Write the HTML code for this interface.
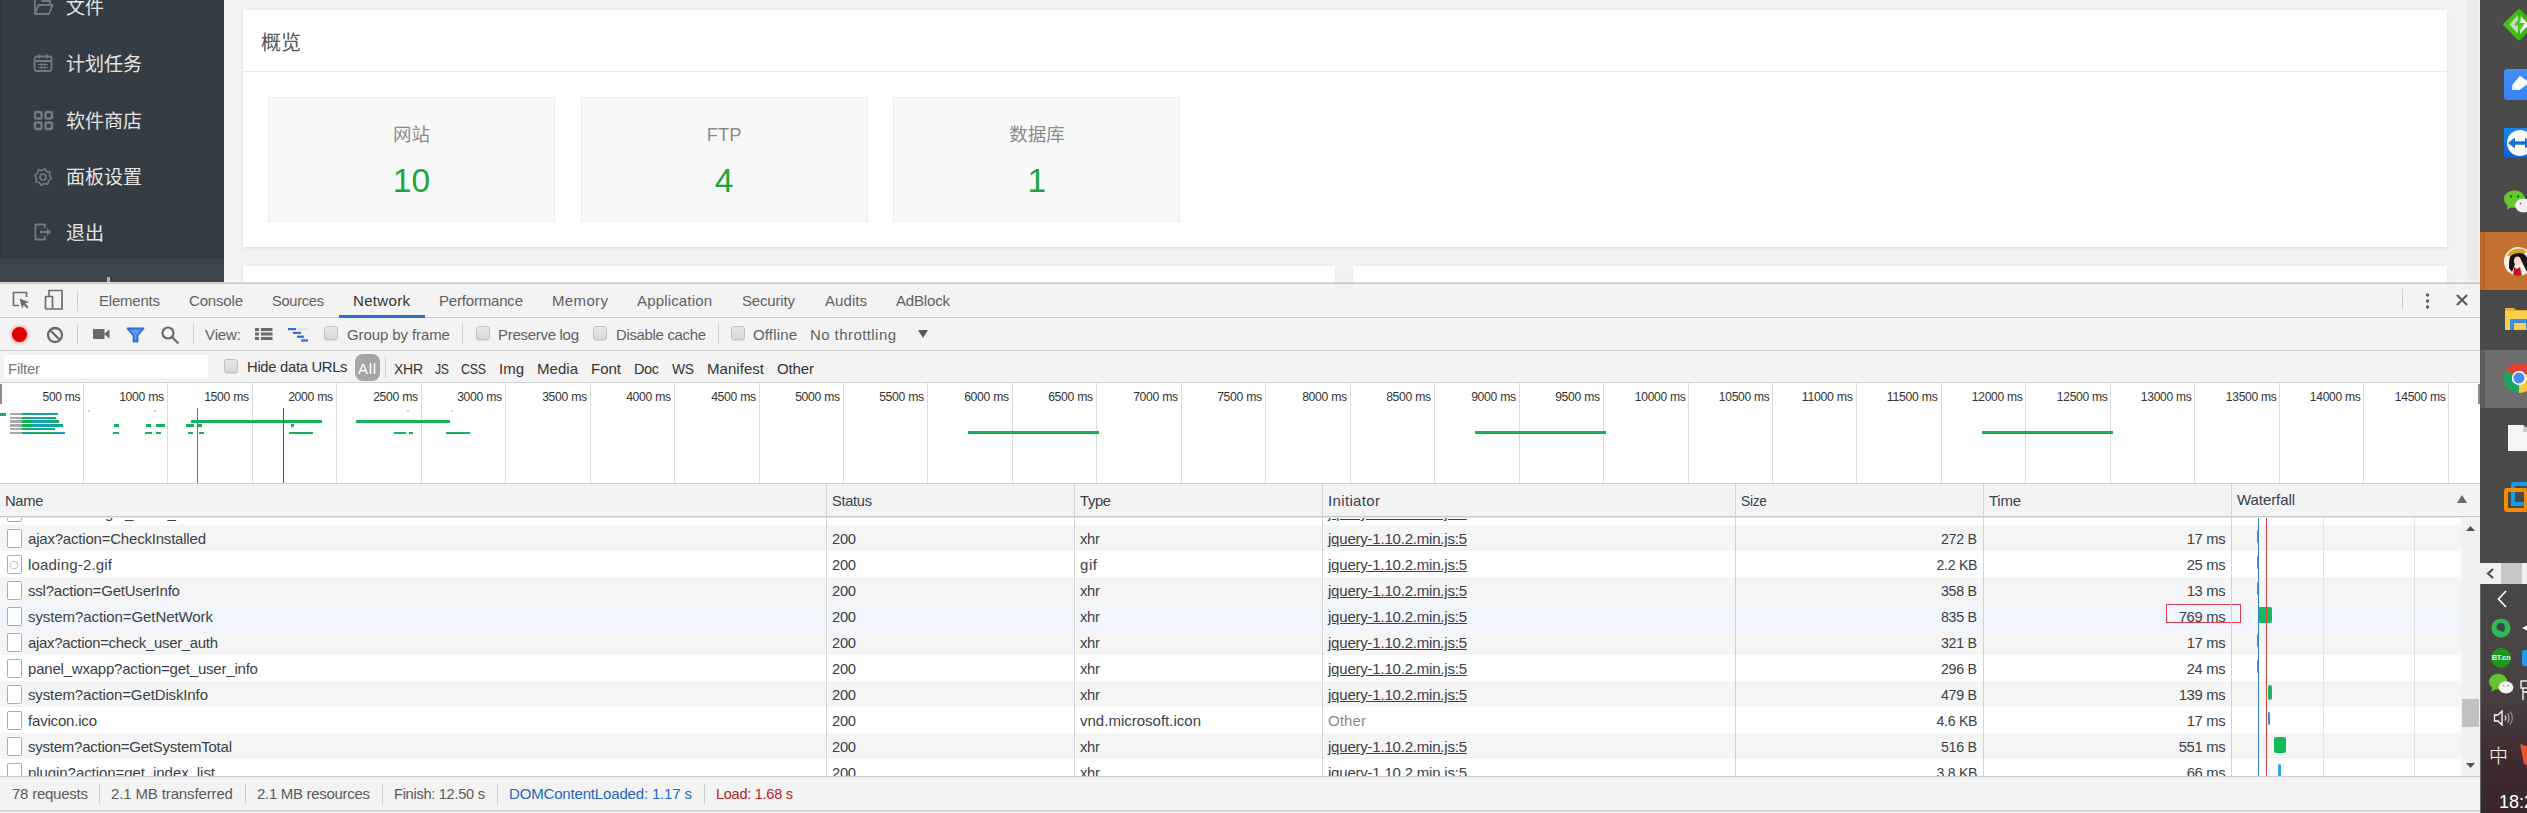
<!DOCTYPE html>
<html lang="zh-CN">
<head>
<meta charset="utf-8">
<title>宝塔面板 - DevTools Network</title>
<style>
*{box-sizing:border-box;margin:0;padding:0}
html,body{width:2527px;height:813px;overflow:hidden;background:#f2f2f2}
body{position:relative;font-family:"Liberation Sans","Noto Sans CJK SC",sans-serif;color:#333}
.a{position:absolute}
svg{position:absolute;overflow:visible}
#page{position:absolute;left:0;top:0;width:2480px;height:283px;background:#f2f2f2;overflow:hidden}
#side{position:absolute;left:0;top:0;width:224px;height:283px;background:#353d44}
#side .edge{position:absolute;left:0;top:0;width:3px;height:259px;background:#30373e}
#side .foot{position:absolute;left:0;top:259px;width:224px;height:24px;background:#3c444d}
#side .plus{position:absolute;left:107px;top:277px;width:3px;height:5px;background:#b9a9b4}
.mi{position:absolute;left:66px;height:30px;line-height:30px;font-size:19px;color:#e4e4e4;white-space:nowrap;font-family:"Noto Sans CJK SC","Liberation Sans",sans-serif}
.card{position:absolute;background:#fff;box-shadow:0 1px 3px rgba(0,0,0,.09)}
#c1{left:243px;top:10px;width:2204px;height:237px}
#c1 .hd{position:absolute;left:0;top:0;width:100%;height:62px;border-bottom:1px solid #eaeaea}
#c1 .tt{position:absolute;left:18px;top:17px;font-size:20px;line-height:30px;color:#555;font-family:"Noto Sans CJK SC","Liberation Sans",sans-serif}
.st{position:absolute;top:87px;width:287px;height:125px;background:#f9f9f9;border:1px solid #efefef;text-align:center}
.st .lb{position:absolute;left:0;width:100%;top:24px;font-size:18.5px;line-height:26px;color:#8c8c8c}
.st .nm{position:absolute;left:0;width:100%;top:61px;font-size:33.5px;line-height:44px;color:#20a53a}
#c2{left:243px;top:266px;width:1092px;height:30px}
#c3{left:1353px;top:266px;width:1094px;height:30px}
/* devtools */
#dt{position:absolute;left:0;top:282px;width:2480px;height:531px;background:#f3f3f3;font-size:15px;color:#3a4148;overflow:hidden}
#dt .t{position:absolute;white-space:nowrap;height:20px;line-height:20px}
.hl{position:absolute;left:0;width:2480px;height:1px;background:#cdcdcd}
.vl{position:absolute;width:1px;background:#cfcfcf}
.tab{color:#616161}
.cb{position:absolute;width:14px;height:14px;border:1px solid #c2c2c2;border-radius:3px;background:linear-gradient(#e6e6e6,#d8d8d8);box-shadow:0 1px 1px rgba(0,0,0,.10)}
.row{position:absolute;left:0;width:2461px;height:26px}
.fi{position:absolute;left:6.500px;top:4px;width:15px;height:18.500px;border:1.200px solid #ababab;background:#fff;border-radius:1.500px}
.lnk{text-decoration:underline}
.r{text-align:right}
</style>
</head>
<body>
<div id="page">
<div id="side"><div class="edge"></div>
<div class="mi" style="top:-9px">文件</div>
<div class="mi" style="top:48px">计划任务</div>
<div class="mi" style="top:105px">软件商店</div>
<div class="mi" style="top:161px">面板设置</div>
<div class="mi" style="top:217px">退出</div>
<svg style="left:33px;top:-4px" width="20" height="20" viewBox="0 0 20 20" fill="none" stroke="#737a81" stroke-width="1.8" stroke-linejoin="round"><path d="M2 18V3h6l2 2h7v4M2 18l3.5-9H19.500l-3.5 9z"/></svg>
<svg style="left:33px;top:53px" width="20" height="20" viewBox="0 0 20 20" fill="none" stroke="#737a81" stroke-width="1.8"><rect x="1.500" y="3.500" width="17" height="14.500" rx="2"/><path d="M1.500 8h17M6 1.500v4M14 1.500v4" /><path d="M5 11.500h10M5 14.500h10M8.300 9.500v7M11.700 9.500v7" stroke-width="1"/></svg>
<svg style="left:33px;top:110px" width="20" height="20" viewBox="0 0 20 20" fill="none" stroke="#737a81" stroke-width="2.400"><rect x="2" y="2" width="6.500" height="6.500" rx="1.500"/><rect x="12.500" y="2" width="6.500" height="6.500" rx="1.500"/><rect x="2" y="12.500" width="6.500" height="6.500" rx="1.500"/><rect x="12.500" y="12.500" width="6.500" height="6.500" rx="1.500"/></svg>
<svg style="left:33px;top:167px" width="20" height="20" viewBox="0 0 20 20" fill="none" stroke="#737a81" stroke-width="1.600" stroke-linejoin="round"><path d="M18.43 11.68 L15.49 13.67 L14.78 17.15 L11.29 16.47 L8.32 18.43 L6.33 15.49 L2.85 14.78 L3.53 11.29 L1.57 8.32 L4.51 6.33 L5.22 2.85 L8.71 3.53 L11.68 1.57 L13.67 4.51 L17.15 5.22 L16.47 8.71Z"/><circle cx="10" cy="10" r="3"/></svg>
<svg style="left:33px;top:222px" width="20" height="20" viewBox="0 0 20 20" fill="none" stroke="#737a81" stroke-width="1.800" stroke-linejoin="round"><path d="M12 6V2.500H2.500v15H12V14"/><path d="M7 10h8" stroke-width="2.200"/><path d="M14 6.500l4.500 3.500-4.500 3.500z" fill="#737a81" stroke="none"/></svg>
<div class="foot"></div><div class="plus"></div></div>
<div class="card" id="c1"><div class="hd"><div class="tt">概览</div></div>
<div class="st" style="left:25px"><div class="lb">网站</div><div class="nm">10</div></div>
<div class="st" style="left:337.7px"><div class="lb">FTP</div><div class="nm">4</div></div>
<div class="st" style="left:650.4px"><div class="lb">数据库</div><div class="nm">1</div></div>
</div><div class="card" id="c2"></div><div class="card" id="c3"></div>
<div class="a" style="left:2467px;top:-20px;width:12px;height:301px;border-radius:6px;background:#ebebeb"></div>
</div>
<div id="dt">
<div class="hl" style="top:0;background:#d9d9d9"></div>
<div class="hl" style="top:1px;background:#c9c9c9"></div>
<div class="hl" style="top:35px"></div>
<div class="hl" style="top:68px"></div>
<div class="hl" style="top:100px"></div>
<div class="t tab" style="left:99px;top:9px;letter-spacing:-0.219px;">Elements</div>
<div class="t tab" style="left:189px;top:9px;letter-spacing:-0.172px;">Console</div>
<div class="t tab" style="left:272px;top:9px;letter-spacing:-0.3px;transform:scaleX(0.9769);transform-origin:0 50%;">Sources</div>
<div class="t tab" style="left:353px;top:9px;color:#333;letter-spacing:0.331px;">Network</div>
<div class="t tab" style="left:439px;top:9px;letter-spacing:-0.189px;">Performance</div>
<div class="t tab" style="left:552px;top:9px;letter-spacing:0.362px;">Memory</div>
<div class="t tab" style="left:637px;top:9px;letter-spacing:0.163px;">Application</div>
<div class="t tab" style="left:742px;top:9px;letter-spacing:-0.170px;">Security</div>
<div class="t tab" style="left:825px;top:9px;letter-spacing:0.062px;">Audits</div>
<div class="t tab" style="left:896px;top:9px;letter-spacing:-0.169px;">AdBlock</div>
<div class="a" style="left:339px;top:33px;width:86px;height:3px;background:#2a6fdb"></div>
<svg style="left:11px;top:8px" width="20" height="20" viewBox="0 0 20 20" fill="none" stroke="#6e6e6e" stroke-width="1.700"><path d="M8 15.500H2.500V2.500h13V7"/><path d="M8.500 8.500l9.500 3.600-3.800 1.500 3.300 3.500-1.300 1.300-3.400-3.500-1.700 3.600z" fill="#6e6e6e" stroke="none"/></svg>
<svg style="left:44px;top:7px" width="20" height="22" viewBox="0 0 20 22" fill="none" stroke="#6e6e6e" stroke-width="1.700"><path d="M5 7V1.500h13v18.500H9"/><rect x="1.500" y="7.500" width="7" height="12.500" rx="0.500"/></svg>
<div class="vl" style="left:77px;top:9px;height:20px"></div>
<div class="vl" style="left:2402px;top:7px;height:21px"></div>
<svg style="left:2424.500px;top:9.699999999999989px" width="5" height="18" viewBox="0 0 5 18" fill="#5f6368"><circle cx="2.500" cy="3" r="1.700"/><circle cx="2.500" cy="9" r="1.700"/><circle cx="2.500" cy="15" r="1.700"/></svg>
<svg style="left:2455.500px;top:12px" width="12" height="12" viewBox="0 0 13 13" stroke="#5a5a5a" stroke-width="2.300" fill="none"><path d="M1 1l11 11M12 1L1 12"/></svg>
<div class="a" style="left:12px;top:44.5px;width:15px;height:15px;border-radius:50%;background:#df0000;box-shadow:0 0 3px 1px rgba(255,60,60,.55)"></div>
<svg style="left:46px;top:43.5px" width="18" height="18" viewBox="0 0 18 18" fill="none" stroke="#6a6a6a" stroke-width="2.300"><circle cx="9" cy="9" r="7"/><path d="M4 4l10 10"/></svg>
<div class="vl" style="left:77px;top:42px;height:20px"></div>
<svg style="left:93px;top:46px" width="17" height="12" viewBox="0 0 17 12" fill="#6a6a6a"><rect x="0" y="1" width="11.500" height="10"/><path d="M11 6l5.500-4.500v9z"/></svg>
<svg style="left:126px;top:45px" width="19" height="16" viewBox="0 0 19 16" fill="#5b9bea" stroke="#2f6fd6" stroke-width="1.800" stroke-linejoin="round"><path d="M1.500 1.500h16l-6 7v6h-4v-6z"/></svg>
<svg style="left:160px;top:43px" width="20" height="20" viewBox="0 0 20 20" fill="none" stroke="#6a6a6a" stroke-width="2.200"><circle cx="8" cy="8" r="5.500"/><path d="M12 12l6.500 6.500"/></svg>
<div class="vl" style="left:193px;top:42px;height:20px"></div>
<div class="t tab" style="left:205px;top:43px;letter-spacing:-0.102px;">View:</div>
<svg style="left:255px;top:46px" width="17.500" height="12" viewBox="0 0 18 14" preserveAspectRatio="none" fill="#6c6c6c"><rect x="0" y="0" width="4" height="3.600"/><rect x="6" y="0" width="12" height="3.600"/><rect x="0" y="5.200" width="4" height="3.600"/><rect x="6" y="5.200" width="12" height="3.600"/><rect x="0" y="10.400" width="4" height="3.600"/><rect x="6" y="10.400" width="12" height="3.600"/></svg>
<svg style="left:288px;top:46px" width="21" height="14" viewBox="0 0 21 14" fill="#2f6fd6"><rect x="0" y="0" width="8" height="2.200"/><rect x="5" y="3.800" width="8" height="2.200"/><rect x="9" y="7.600" width="7" height="2.200"/><rect x="13" y="11.400" width="7" height="2.200"/><rect x="8" y="0.500" width="12" height="1" fill="#c5d7f2"/></svg>
<div class="cb" style="left:324px;top:44px"></div>
<div class="t tab" style="left:347px;top:43px;letter-spacing:-0.096px;">Group by frame</div>
<div class="vl" style="left:462px;top:42px;height:20px"></div>
<div class="cb" style="left:476px;top:44px"></div>
<div class="t tab" style="left:498px;top:43px;letter-spacing:-0.293px;">Preserve log</div>
<div class="cb" style="left:593px;top:44px"></div>
<div class="t tab" style="left:616px;top:43px;letter-spacing:-0.3px;transform:scaleX(0.9932);transform-origin:0 50%;">Disable cache</div>
<div class="vl" style="left:718px;top:42px;height:20px"></div>
<div class="cb" style="left:731px;top:44px"></div>
<div class="t tab" style="left:753px;top:43px;letter-spacing:0.151px;">Offline</div>
<div class="t tab" style="left:810px;top:43px;letter-spacing:0.426px;">No throttling</div>
<svg style="left:918px;top:48px" width="10" height="8" viewBox="0 0 10 8" fill="#5a5a5a"><path d="M0 0h10L5 8z"/></svg>
<div class="a" style="left:4px;top:73px;width:204px;height:23px;background:#fff"></div>
<div class="t " style="left:8px;top:77px;color:#777;letter-spacing:-0.266px;">Filter</div>
<div class="cb" style="left:224px;top:77px"></div>
<div class="t " style="left:247px;top:75px;color:#333;letter-spacing:-0.3px;transform:scaleX(0.9854);transform-origin:0 50%;">Hide data URLs</div>
<div class="a" style="left:355px;top:72px;width:25px;height:27px;border-radius:8px;background:#a5a5a5"></div>
<div class="t " style="left:358px;top:77px;color:#fff;letter-spacing:0.672px;">All</div>
<div class="vl" style="left:385px;top:75px;height:21px"></div>
<div class="t " style="left:394px;top:77px;color:#333;letter-spacing:-0.3px;transform:scaleX(0.9338);transform-origin:0 50%;">XHR</div>
<div class="t " style="left:435px;top:77px;color:#333;letter-spacing:-0.3px;transform:scaleX(0.8140);transform-origin:0 50%;">JS</div>
<div class="t " style="left:461px;top:77px;color:#333;letter-spacing:-0.3px;transform:scaleX(0.8270);transform-origin:0 50%;">CSS</div>
<div class="t " style="left:499px;top:77px;color:#333;letter-spacing:-0.008px;">Img</div>
<div class="t " style="left:537px;top:77px;color:#333;letter-spacing:0.035px;">Media</div>
<div class="t " style="left:591px;top:77px;color:#333;letter-spacing:-0.005px;">Font</div>
<div class="t " style="left:634px;top:77px;color:#333;letter-spacing:-0.3px;transform:scaleX(0.9589);transform-origin:0 50%;">Doc</div>
<div class="t " style="left:672px;top:77px;color:#333;letter-spacing:-0.3px;transform:scaleX(0.9222);transform-origin:0 50%;">WS</div>
<div class="t " style="left:707px;top:77px;color:#333;letter-spacing:0.042px;">Manifest</div>
<div class="t " style="left:777px;top:77px;color:#333;letter-spacing:-0.133px;">Other</div>
<div class="a" style="left:0;top:101px;width:2480px;height:100px;background:#fff"></div>
<div class="vl" style="left:83px;top:101px;height:100px;background:#dcdcdc"></div>
<div class="t r " style="right:2400px;top:105px;color:#333;font-size:12.5px;letter-spacing:-0.3px;transform:scaleX(0.9624);transform-origin:100% 50%;">500 ms</div>
<div class="vl" style="left:167px;top:101px;height:100px;background:#dcdcdc"></div>
<div class="t r " style="right:2316px;top:105px;color:#333;font-size:12.5px;letter-spacing:-0.3px;transform:scaleX(0.9753);transform-origin:100% 50%;">1000 ms</div>
<div class="vl" style="left:252px;top:101px;height:100px;background:#dcdcdc"></div>
<div class="t r " style="right:2231px;top:105px;color:#333;font-size:12.5px;letter-spacing:-0.3px;transform:scaleX(0.9753);transform-origin:100% 50%;">1500 ms</div>
<div class="vl" style="left:336px;top:101px;height:100px;background:#dcdcdc"></div>
<div class="t r " style="right:2147px;top:105px;color:#333;font-size:12.5px;letter-spacing:-0.3px;transform:scaleX(0.9753);transform-origin:100% 50%;">2000 ms</div>
<div class="vl" style="left:421px;top:101px;height:100px;background:#dcdcdc"></div>
<div class="t r " style="right:2062px;top:105px;color:#333;font-size:12.5px;letter-spacing:-0.3px;transform:scaleX(0.9753);transform-origin:100% 50%;">2500 ms</div>
<div class="vl" style="left:505px;top:101px;height:100px;background:#dcdcdc"></div>
<div class="t r " style="right:1978px;top:105px;color:#333;font-size:12.5px;letter-spacing:-0.3px;transform:scaleX(0.9753);transform-origin:100% 50%;">3000 ms</div>
<div class="vl" style="left:590px;top:101px;height:100px;background:#dcdcdc"></div>
<div class="t r " style="right:1893px;top:105px;color:#333;font-size:12.5px;letter-spacing:-0.3px;transform:scaleX(0.9753);transform-origin:100% 50%;">3500 ms</div>
<div class="vl" style="left:674px;top:101px;height:100px;background:#dcdcdc"></div>
<div class="t r " style="right:1809px;top:105px;color:#333;font-size:12.5px;letter-spacing:-0.3px;transform:scaleX(0.9753);transform-origin:100% 50%;">4000 ms</div>
<div class="vl" style="left:759px;top:101px;height:100px;background:#dcdcdc"></div>
<div class="t r " style="right:1724px;top:105px;color:#333;font-size:12.5px;letter-spacing:-0.3px;transform:scaleX(0.9753);transform-origin:100% 50%;">4500 ms</div>
<div class="vl" style="left:843px;top:101px;height:100px;background:#dcdcdc"></div>
<div class="t r " style="right:1640px;top:105px;color:#333;font-size:12.5px;letter-spacing:-0.3px;transform:scaleX(0.9753);transform-origin:100% 50%;">5000 ms</div>
<div class="vl" style="left:927px;top:101px;height:100px;background:#dcdcdc"></div>
<div class="t r " style="right:1556px;top:105px;color:#333;font-size:12.5px;letter-spacing:-0.3px;transform:scaleX(0.9753);transform-origin:100% 50%;">5500 ms</div>
<div class="vl" style="left:1012px;top:101px;height:100px;background:#dcdcdc"></div>
<div class="t r " style="right:1471px;top:105px;color:#333;font-size:12.5px;letter-spacing:-0.3px;transform:scaleX(0.9753);transform-origin:100% 50%;">6000 ms</div>
<div class="vl" style="left:1096px;top:101px;height:100px;background:#dcdcdc"></div>
<div class="t r " style="right:1387px;top:105px;color:#333;font-size:12.5px;letter-spacing:-0.3px;transform:scaleX(0.9753);transform-origin:100% 50%;">6500 ms</div>
<div class="vl" style="left:1181px;top:101px;height:100px;background:#dcdcdc"></div>
<div class="t r " style="right:1302px;top:105px;color:#333;font-size:12.5px;letter-spacing:-0.3px;transform:scaleX(0.9753);transform-origin:100% 50%;">7000 ms</div>
<div class="vl" style="left:1265px;top:101px;height:100px;background:#dcdcdc"></div>
<div class="t r " style="right:1218px;top:105px;color:#333;font-size:12.5px;letter-spacing:-0.3px;transform:scaleX(0.9753);transform-origin:100% 50%;">7500 ms</div>
<div class="vl" style="left:1350px;top:101px;height:100px;background:#dcdcdc"></div>
<div class="t r " style="right:1133px;top:105px;color:#333;font-size:12.5px;letter-spacing:-0.3px;transform:scaleX(0.9753);transform-origin:100% 50%;">8000 ms</div>
<div class="vl" style="left:1434px;top:101px;height:100px;background:#dcdcdc"></div>
<div class="t r " style="right:1049px;top:105px;color:#333;font-size:12.5px;letter-spacing:-0.3px;transform:scaleX(0.9753);transform-origin:100% 50%;">8500 ms</div>
<div class="vl" style="left:1519px;top:101px;height:100px;background:#dcdcdc"></div>
<div class="t r " style="right:964px;top:105px;color:#333;font-size:12.5px;letter-spacing:-0.3px;transform:scaleX(0.9753);transform-origin:100% 50%;">9000 ms</div>
<div class="vl" style="left:1603px;top:101px;height:100px;background:#dcdcdc"></div>
<div class="t r " style="right:880px;top:105px;color:#333;font-size:12.5px;letter-spacing:-0.3px;transform:scaleX(0.9753);transform-origin:100% 50%;">9500 ms</div>
<div class="vl" style="left:1688px;top:101px;height:100px;background:#dcdcdc"></div>
<div class="t r " style="right:795px;top:105px;color:#333;font-size:12.5px;letter-spacing:-0.3px;transform:scaleX(0.9661);transform-origin:100% 50%;">10000 ms</div>
<div class="vl" style="left:1772px;top:101px;height:100px;background:#dcdcdc"></div>
<div class="t r " style="right:711px;top:105px;color:#333;font-size:12.5px;letter-spacing:-0.3px;transform:scaleX(0.9661);transform-origin:100% 50%;">10500 ms</div>
<div class="vl" style="left:1856px;top:101px;height:100px;background:#dcdcdc"></div>
<div class="t r " style="right:627px;top:105px;color:#333;font-size:12.5px;letter-spacing:-0.3px;transform:scaleX(0.9833);transform-origin:100% 50%;">11000 ms</div>
<div class="vl" style="left:1941px;top:101px;height:100px;background:#dcdcdc"></div>
<div class="t r " style="right:542px;top:105px;color:#333;font-size:12.5px;letter-spacing:-0.3px;transform:scaleX(0.9833);transform-origin:100% 50%;">11500 ms</div>
<div class="vl" style="left:2025px;top:101px;height:100px;background:#dcdcdc"></div>
<div class="t r " style="right:458px;top:105px;color:#333;font-size:12.5px;letter-spacing:-0.3px;transform:scaleX(0.9661);transform-origin:100% 50%;">12000 ms</div>
<div class="vl" style="left:2110px;top:101px;height:100px;background:#dcdcdc"></div>
<div class="t r " style="right:373px;top:105px;color:#333;font-size:12.5px;letter-spacing:-0.3px;transform:scaleX(0.9661);transform-origin:100% 50%;">12500 ms</div>
<div class="vl" style="left:2194px;top:101px;height:100px;background:#dcdcdc"></div>
<div class="t r " style="right:289px;top:105px;color:#333;font-size:12.5px;letter-spacing:-0.3px;transform:scaleX(0.9661);transform-origin:100% 50%;">13000 ms</div>
<div class="vl" style="left:2279px;top:101px;height:100px;background:#dcdcdc"></div>
<div class="t r " style="right:204px;top:105px;color:#333;font-size:12.5px;letter-spacing:-0.3px;transform:scaleX(0.9661);transform-origin:100% 50%;">13500 ms</div>
<div class="vl" style="left:2363px;top:101px;height:100px;background:#dcdcdc"></div>
<div class="t r " style="right:120px;top:105px;color:#333;font-size:12.5px;letter-spacing:-0.3px;transform:scaleX(0.9661);transform-origin:100% 50%;">14000 ms</div>
<div class="vl" style="left:2448px;top:101px;height:100px;background:#dcdcdc"></div>
<div class="t r " style="right:35px;top:105px;color:#333;font-size:12.5px;letter-spacing:-0.3px;transform:scaleX(0.9661);transform-origin:100% 50%;">14500 ms</div>
<div class="a" style="left:0;top:102px;width:2px;height:20px;background:#8a8a8a"></div>
<div class="a" style="left:2478px;top:102px;width:2px;height:20px;background:#8a8a8a"></div>
<div class="a" style="left:0px;top:130.7px;width:6.0px;height:3px;background:#17b05a"></div>
<div class="a" style="left:10.2px;top:130.9px;width:11.8px;height:2.6px;background:#a9a9a9"></div>
<div class="a" style="left:22px;top:130.9px;width:35.8px;height:2.6px;background:#14b05a"></div>
<div class="a" style="left:30px;top:130.9px;width:28.0px;height:2.600px;background:#1e96e6;opacity:0.55"></div>
<div class="a" style="left:10.2px;top:134.6px;width:11.8px;height:2.6px;background:#a9a9a9"></div>
<div class="a" style="left:22px;top:134.6px;width:34.2px;height:2.6px;background:#14b05a"></div>
<div class="a" style="left:32px;top:134.6px;width:14.0px;height:2.600px;background:#1e96e6;opacity:0.7"></div>
<div class="a" style="left:10.2px;top:138.4px;width:11.8px;height:2.6px;background:#a9a9a9"></div>
<div class="a" style="left:22px;top:138.4px;width:36.9px;height:2.6px;background:#14b05a"></div>
<div class="a" style="left:32px;top:138.4px;width:19.0px;height:2.600px;background:#1e96e6;opacity:0.6"></div>
<div class="a" style="left:10.2px;top:142.1px;width:11.8px;height:2.6px;background:#a9a9a9"></div>
<div class="a" style="left:22px;top:142.1px;width:40.8px;height:2.6px;background:#14b05a"></div>
<div class="a" style="left:32px;top:142.1px;width:31.0px;height:2.600px;background:#1e96e6;opacity:0.5"></div>
<div class="a" style="left:10.2px;top:145.9px;width:11.8px;height:2.6px;background:#a9a9a9"></div>
<div class="a" style="left:22px;top:145.9px;width:32.8px;height:2.6px;background:#14b05a"></div>
<div class="a" style="left:35px;top:145.9px;width:14.0px;height:2.600px;background:#1e96e6;opacity:0.8"></div>
<div class="a" style="left:10.2px;top:149.6px;width:11.8px;height:2.6px;background:#a9a9a9"></div>
<div class="a" style="left:22px;top:149.6px;width:42.7px;height:2.6px;background:#14b05a"></div>
<div class="a" style="left:24px;top:149.6px;width:10.0px;height:2.600px;background:#1e96e6;opacity:0.5"></div>
<div class="a" style="left:56px;top:149.6px;width:8.7px;height:2.600px;background:#1e96e6;opacity:1"></div>
<div class="a" style="left:114px;top:142.2px;width:5.0px;height:2.6px;background:#17b05a"></div>
<div class="a" style="left:145.5px;top:142.2px;width:5.0px;height:2.6px;background:#17b05a"></div>
<div class="a" style="left:156px;top:142.2px;width:9.0px;height:2.6px;background:#17b05a"></div>
<div class="a" style="left:186px;top:142.2px;width:7.5px;height:2.6px;background:#17b05a"></div>
<div class="a" style="left:197.5px;top:142.2px;width:4.5px;height:2.6px;background:#17b05a"></div>
<div class="a" style="left:290.5px;top:142.2px;width:3.5px;height:2.6px;background:#17b05a"></div>
<div class="a" style="left:113px;top:149.7px;width:6.0px;height:2.6px;background:#17b05a"></div>
<div class="a" style="left:145px;top:149.7px;width:7.0px;height:2.6px;background:#17b05a"></div>
<div class="a" style="left:155.5px;top:149.7px;width:5.5px;height:2.6px;background:#17b05a"></div>
<div class="a" style="left:187.5px;top:149.7px;width:5.0px;height:2.6px;background:#17b05a"></div>
<div class="a" style="left:198.5px;top:149.7px;width:5.0px;height:2.6px;background:#17b05a"></div>
<div class="a" style="left:288.5px;top:149.7px;width:24.5px;height:2.6px;background:#17b05a"></div>
<div class="a" style="left:393.5px;top:149.7px;width:12.5px;height:2.6px;background:#17b05a"></div>
<div class="a" style="left:409px;top:149.7px;width:4.0px;height:2.6px;background:#17b05a"></div>
<div class="a" style="left:445.5px;top:149.7px;width:24.5px;height:2.6px;background:#17b05a"></div>
<div class="a" style="left:190.5px;top:138.2px;width:131.5px;height:3px;background:#17b05a"></div>
<div class="a" style="left:355.5px;top:138.2px;width:94.5px;height:3px;background:#17b05a"></div>
<div class="a" style="left:968px;top:149.2px;width:130.5px;height:2.6px;background:#17b05a"></div>
<div class="a" style="left:1475px;top:149.2px;width:130.5px;height:2.6px;background:#17b05a"></div>
<div class="a" style="left:1982px;top:149.2px;width:130.5px;height:2.6px;background:#17b05a"></div>
<div class="a" style="left:88px;top:128px;width:2px;height:2px;background:#d0d0d0"></div>
<div class="a" style="left:154px;top:128px;width:2px;height:2px;background:#d0d0d0"></div>
<div class="a" style="left:407px;top:128px;width:2px;height:2px;background:#d0d0d0"></div>
<div class="a" style="left:451px;top:128px;width:2px;height:2px;background:#d0d0d0"></div>
<div class="a" style="left:196.500px;top:126px;width:1.200px;height:75px;background:#3a7fd6"></div>
<div class="a" style="left:283px;top:126px;width:1px;height:75px;background:#c22233"></div>
<div class="hl" style="top:201px"></div>
<div class="a" style="left:0;top:235px;width:2461px;height:260px;background:#fff"></div>
<div class="row" style="top:217px;background:#fff"><div class="fi"></div></div>
<div class="t " style="left:28px;top:221px;letter-spacing:-0.289px;">site?action=get_index_list</div>
<div class="t lnk" style="left:1328px;top:221px;letter-spacing:-0.211px;">jquery-1.10.2.min.js:5</div>
<div class="row" style="top:243px;background:#f5f5f5"><div class="fi"></div></div>
<div class="t " style="left:28px;top:247px;letter-spacing:-0.202px;">ajax?action=CheckInstalled</div>
<div class="t " style="left:832px;top:247px;letter-spacing:-0.3px;transform:scaleX(0.9823);transform-origin:0 50%;">200</div>
<div class="t " style="left:1080px;top:247px;letter-spacing:-0.3px;transform:scaleX(0.9880);transform-origin:0 50%;">xhr</div>
<div class="t lnk" style="left:1328px;top:247px;letter-spacing:-0.211px;">jquery-1.10.2.min.js:5</div>
<div class="t r " style="right:503px;top:247px;letter-spacing:-0.3px;transform:scaleX(0.9473);transform-origin:100% 50%;">272 B</div>
<div class="t r " style="right:255px;top:247px;letter-spacing:-0.3px;transform:scaleX(0.9834);transform-origin:100% 50%;">17 ms</div>
<div class="row" style="top:269px;background:#fff"><div class="fi"></div><div class="a" style="left:9.500px;top:9.500px;width:8px;height:8px;border-radius:50%;border:1.800px dotted #8a8a8a"></div></div>
<div class="t " style="left:28px;top:273px;letter-spacing:0.189px;">loading-2.gif</div>
<div class="t " style="left:832px;top:273px;letter-spacing:-0.3px;transform:scaleX(0.9823);transform-origin:0 50%;">200</div>
<div class="t " style="left:1080px;top:273px;letter-spacing:0.578px;">gif</div>
<div class="t lnk" style="left:1328px;top:273px;letter-spacing:-0.211px;">jquery-1.10.2.min.js:5</div>
<div class="t r " style="right:503px;top:273px;letter-spacing:-0.3px;transform:scaleX(0.9419);transform-origin:100% 50%;">2.2 KB</div>
<div class="t r " style="right:255px;top:273px;letter-spacing:-0.3px;transform:scaleX(0.9834);transform-origin:100% 50%;">25 ms</div>
<div class="row" style="top:295px;background:#f5f5f5"><div class="fi"></div></div>
<div class="t " style="left:28px;top:299px;letter-spacing:-0.208px;">ssl?action=GetUserInfo</div>
<div class="t " style="left:832px;top:299px;letter-spacing:-0.3px;transform:scaleX(0.9823);transform-origin:0 50%;">200</div>
<div class="t " style="left:1080px;top:299px;letter-spacing:-0.3px;transform:scaleX(0.9880);transform-origin:0 50%;">xhr</div>
<div class="t lnk" style="left:1328px;top:299px;letter-spacing:-0.211px;">jquery-1.10.2.min.js:5</div>
<div class="t r " style="right:503px;top:299px;letter-spacing:-0.3px;transform:scaleX(0.9473);transform-origin:100% 50%;">358 B</div>
<div class="t r " style="right:255px;top:299px;letter-spacing:-0.3px;transform:scaleX(0.9834);transform-origin:100% 50%;">13 ms</div>
<div class="row" style="top:321px;background:#f1f5fc"><div class="fi"></div></div>
<div class="t " style="left:28px;top:325px;letter-spacing:-0.084px;">system?action=GetNetWork</div>
<div class="t " style="left:832px;top:325px;letter-spacing:-0.3px;transform:scaleX(0.9823);transform-origin:0 50%;">200</div>
<div class="t " style="left:1080px;top:325px;letter-spacing:-0.3px;transform:scaleX(0.9880);transform-origin:0 50%;">xhr</div>
<div class="t lnk" style="left:1328px;top:325px;letter-spacing:-0.211px;">jquery-1.10.2.min.js:5</div>
<div class="t r " style="right:503px;top:325px;letter-spacing:-0.3px;transform:scaleX(0.9473);transform-origin:100% 50%;">835 B</div>
<div class="t r " style="right:255px;top:325px;letter-spacing:-0.3px;transform:scaleX(0.9853);transform-origin:100% 50%;">769 ms</div>
<div class="row" style="top:347px;background:#f5f5f5"><div class="fi"></div></div>
<div class="t " style="left:28px;top:351px;letter-spacing:-0.3px;transform:scaleX(0.9941);transform-origin:0 50%;">ajax?action=check_user_auth</div>
<div class="t " style="left:832px;top:351px;letter-spacing:-0.3px;transform:scaleX(0.9823);transform-origin:0 50%;">200</div>
<div class="t " style="left:1080px;top:351px;letter-spacing:-0.3px;transform:scaleX(0.9880);transform-origin:0 50%;">xhr</div>
<div class="t lnk" style="left:1328px;top:351px;letter-spacing:-0.211px;">jquery-1.10.2.min.js:5</div>
<div class="t r " style="right:503px;top:351px;letter-spacing:-0.3px;transform:scaleX(0.9473);transform-origin:100% 50%;">321 B</div>
<div class="t r " style="right:255px;top:351px;letter-spacing:-0.3px;transform:scaleX(0.9834);transform-origin:100% 50%;">17 ms</div>
<div class="row" style="top:373px;background:#fff"><div class="fi"></div></div>
<div class="t " style="left:28px;top:377px;letter-spacing:-0.209px;">panel_wxapp?action=get_user_info</div>
<div class="t " style="left:832px;top:377px;letter-spacing:-0.3px;transform:scaleX(0.9823);transform-origin:0 50%;">200</div>
<div class="t " style="left:1080px;top:377px;letter-spacing:-0.3px;transform:scaleX(0.9880);transform-origin:0 50%;">xhr</div>
<div class="t lnk" style="left:1328px;top:377px;letter-spacing:-0.211px;">jquery-1.10.2.min.js:5</div>
<div class="t r " style="right:503px;top:377px;letter-spacing:-0.3px;transform:scaleX(0.9473);transform-origin:100% 50%;">296 B</div>
<div class="t r " style="right:255px;top:377px;letter-spacing:-0.3px;transform:scaleX(0.9834);transform-origin:100% 50%;">24 ms</div>
<div class="row" style="top:399px;background:#f5f5f5"><div class="fi"></div></div>
<div class="t " style="left:28px;top:403px;letter-spacing:-0.126px;">system?action=GetDiskInfo</div>
<div class="t " style="left:832px;top:403px;letter-spacing:-0.3px;transform:scaleX(0.9823);transform-origin:0 50%;">200</div>
<div class="t " style="left:1080px;top:403px;letter-spacing:-0.3px;transform:scaleX(0.9880);transform-origin:0 50%;">xhr</div>
<div class="t lnk" style="left:1328px;top:403px;letter-spacing:-0.211px;">jquery-1.10.2.min.js:5</div>
<div class="t r " style="right:503px;top:403px;letter-spacing:-0.3px;transform:scaleX(0.9473);transform-origin:100% 50%;">479 B</div>
<div class="t r " style="right:255px;top:403px;letter-spacing:-0.3px;transform:scaleX(0.9853);transform-origin:100% 50%;">139 ms</div>
<div class="row" style="top:425px;background:#fff"><div class="fi"></div></div>
<div class="t " style="left:28px;top:429px;letter-spacing:-0.188px;">favicon.ico</div>
<div class="t " style="left:832px;top:429px;letter-spacing:-0.3px;transform:scaleX(0.9823);transform-origin:0 50%;">200</div>
<div class="t " style="left:1080px;top:429px;letter-spacing:0.006px;">vnd.microsoft.icon</div>
<div class="t " style="left:1328px;top:429px;color:#888;letter-spacing:0.117px;">Other</div>
<div class="t r " style="right:503px;top:429px;letter-spacing:-0.3px;transform:scaleX(0.9419);transform-origin:100% 50%;">4.6 KB</div>
<div class="t r " style="right:255px;top:429px;letter-spacing:-0.3px;transform:scaleX(0.9834);transform-origin:100% 50%;">17 ms</div>
<div class="row" style="top:451px;background:#f5f5f5"><div class="fi"></div></div>
<div class="t " style="left:28px;top:455px;letter-spacing:-0.242px;">system?action=GetSystemTotal</div>
<div class="t " style="left:832px;top:455px;letter-spacing:-0.3px;transform:scaleX(0.9823);transform-origin:0 50%;">200</div>
<div class="t " style="left:1080px;top:455px;letter-spacing:-0.3px;transform:scaleX(0.9880);transform-origin:0 50%;">xhr</div>
<div class="t lnk" style="left:1328px;top:455px;letter-spacing:-0.211px;">jquery-1.10.2.min.js:5</div>
<div class="t r " style="right:503px;top:455px;letter-spacing:-0.3px;transform:scaleX(0.9473);transform-origin:100% 50%;">516 B</div>
<div class="t r " style="right:255px;top:455px;letter-spacing:-0.3px;transform:scaleX(0.9853);transform-origin:100% 50%;">551 ms</div>
<div class="row" style="top:477px;background:#fff"><div class="fi"></div></div>
<div class="t " style="left:28px;top:481px;letter-spacing:-0.071px;">plugin?action=get_index_list</div>
<div class="t " style="left:832px;top:481px;letter-spacing:-0.3px;transform:scaleX(0.9823);transform-origin:0 50%;">200</div>
<div class="t " style="left:1080px;top:481px;letter-spacing:-0.3px;transform:scaleX(0.9880);transform-origin:0 50%;">xhr</div>
<div class="t lnk" style="left:1328px;top:481px;letter-spacing:-0.211px;">jquery-1.10.2.min.js:5</div>
<div class="t r " style="right:503px;top:481px;letter-spacing:-0.3px;transform:scaleX(0.9419);transform-origin:100% 50%;">3.8 KB</div>
<div class="t r " style="right:255px;top:481px;letter-spacing:-0.3px;transform:scaleX(0.9834);transform-origin:100% 50%;">66 ms</div>
<div class="a" style="left:2232px;top:235px;width:229px;height:260px;background:transparent"></div>
<div class="vl" style="left:2323px;top:235px;height:260px;background:#e3e3e3"></div>
<div class="vl" style="left:2414px;top:235px;height:260px;background:#e3e3e3"></div>
<div class="a" style="left:2256.5px;top:248.0px;width:2.5px;height:13px;background:#2f9be6;border-radius:2px"></div>
<div class="a" style="left:2256.5px;top:274.0px;width:2.5px;height:13px;background:#2f9be6;border-radius:2px"></div>
<div class="a" style="left:2256.5px;top:300.0px;width:2.5px;height:13px;background:#2f9be6;border-radius:2px"></div>
<div class="a" style="left:2256.5px;top:352.0px;width:2.5px;height:13px;background:#2f9be6;border-radius:2px"></div>
<div class="a" style="left:2256.5px;top:378.0px;width:2.5px;height:13px;background:#2f9be6;border-radius:2px"></div>
<div class="a" style="left:2258px;top:324.5px;width:13.5px;height:16px;background:#10bd5a;border-radius:2px"></div>
<div class="a" style="left:2267.5px;top:403.0px;width:4.5px;height:15px;background:#1fb25e;border-radius:2px"></div>
<div class="a" style="left:2267.5px;top:430.0px;width:2.5px;height:13px;background:#3d8ee0;border-radius:2px"></div>
<div class="a" style="left:2274px;top:454.5px;width:12px;height:16px;background:#10bd5a;border-radius:2px"></div>
<div class="a" style="left:2278px;top:482.0px;width:2.5px;height:13px;background:#2fa5ef;border-radius:2px"></div>
<div class="a" style="left:2258.200px;top:235px;width:1.200px;height:260px;background:#3a7fd6"></div>
<div class="a" style="left:2266px;top:235px;width:1.200px;height:260px;background:#d8434e"></div>
<div class="a" style="left:2166px;top:322px;width:75px;height:19px;border:1.500px solid #d9404d"></div>
<div class="a" style="left:0;top:202px;width:2480px;height:32px;background:#f3f3f3"></div>
<div class="hl" style="top:234px;background:#c8c8c8"></div>
<div class="hl" style="top:235px;background:#e9e9e9"></div>
<div class="t " style="left:4.5px;top:209px;letter-spacing:-0.3px;transform:scaleX(0.9843);transform-origin:0 50%;">Name</div>
<div class="t " style="left:832px;top:209px;letter-spacing:-0.3px;transform:scaleX(0.9749);transform-origin:0 50%;">Status</div>
<div class="t " style="left:1080px;top:209px;letter-spacing:-0.3px;transform:scaleX(0.9805);transform-origin:0 50%;">Type</div>
<div class="t " style="left:1328px;top:209px;letter-spacing:0.350px;">Initiator</div>
<div class="t " style="left:1741px;top:209px;letter-spacing:-0.3px;transform:scaleX(0.9196);transform-origin:0 50%;">Size</div>
<div class="t " style="left:1989px;top:209px;letter-spacing:-0.255px;">Time</div>
<div class="t " style="left:2237px;top:208px;letter-spacing:-0.078px;">Waterfall</div>
<div class="vl" style="left:826px;top:202px;height:293px;background:#d3d3d3"></div>
<div class="vl" style="left:1074px;top:202px;height:293px;background:#d3d3d3"></div>
<div class="vl" style="left:1322px;top:202px;height:293px;background:#d3d3d3"></div>
<div class="vl" style="left:1735px;top:202px;height:293px;background:#d3d3d3"></div>
<div class="vl" style="left:1983px;top:202px;height:293px;background:#d3d3d3"></div>
<div class="vl" style="left:2231px;top:202px;height:293px;background:#d3d3d3"></div>
<svg style="left:2457px;top:213px" width="10" height="8" viewBox="0 0 10 8" fill="#666"><path d="M0 8h10L5 0z"/></svg>
<div class="a" style="left:2461px;top:235px;width:19px;height:260px;background:#f1f1f1"></div>
<svg style="left:2466px;top:244px" width="9" height="5" viewBox="0 0 9 5" fill="#505050"><path d="M0 5h9L4.500 0z"/></svg>
<svg style="left:2466px;top:481px" width="9" height="5" viewBox="0 0 9 5" fill="#505050"><path d="M0 0h9L4.500 5z"/></svg>
<div class="a" style="left:2462px;top:417px;width:17px;height:28px;background:#c1c1c1"></div>
<div class="a" style="left:0;top:494px;width:2480px;height:37px;background:#f3f3f3;border-top:1px solid #cdcdcd"></div>
<div class="hl" style="top:528px;background:#cfcfcf"></div>
<div class="hl" style="top:529px;height:2px;background:#ececec"></div>
<div class="t " style="left:12px;top:502px;color:#5a5a5a;letter-spacing:-0.241px;">78 requests</div>
<div class="t " style="left:111px;top:502px;color:#5a5a5a;letter-spacing:-0.133px;">2.1 MB transferred</div>
<div class="t " style="left:257px;top:502px;color:#5a5a5a;letter-spacing:-0.3px;transform:scaleX(0.9993);transform-origin:0 50%;">2.1 MB resources</div>
<div class="t " style="left:394px;top:502px;color:#5a5a5a;letter-spacing:-0.3px;transform:scaleX(0.9747);transform-origin:0 50%;">Finish: 12.50 s</div>
<div class="t " style="left:509px;top:502px;color:#2467c2;letter-spacing:-0.166px;">DOMContentLoaded: 1.17 s</div>
<div class="t " style="left:716px;top:502px;color:#b5232b;letter-spacing:-0.3px;transform:scaleX(0.9711);transform-origin:0 50%;">Load: 1.68 s</div>
<div class="vl" style="left:99px;top:502px;height:20px"></div>
<div class="vl" style="left:245px;top:502px;height:20px"></div>
<div class="vl" style="left:382px;top:502px;height:20px"></div>
<div class="vl" style="left:497px;top:502px;height:20px"></div>
<div class="vl" style="left:704px;top:502px;height:20px"></div>
</div>
<div id="tb" class="a" style="left:2480px;top:0;width:47px;height:813px;background:#4a4a4a;overflow:hidden;color:#fff">
<svg style="left:23px;top:9px" width="32" height="32" viewBox="0 0 32 32"><path d="M16 2L30 15.500 16 29.500 2 15.500z" fill="#3fc414" stroke="#3fc414" stroke-width="3.500" stroke-linejoin="round"/><path d="M16 2L30 15.500 16 29.500z" fill="#35ad10" stroke="#35ad10" stroke-width="3.500" stroke-linejoin="round" opacity=".55"/><path d="M15 6L6.500 15.500 15 25z" fill="#cfd2cf"/><path d="M17 6l8.500 9.500L17 25z" fill="#f4f4f4"/><path d="M18.500 4.500L11 16.500h5l-2.500 10.500 8.500-13h-5z" fill="#43d015"/></svg>
<div class="a" style="left:24px;top:68.500px;width:32px;height:31px;border-radius:3.500px;background:linear-gradient(#428ff8,#3683f2)"></div>
<svg style="left:24px;top:69px" width="24" height="30" viewBox="0 0 24 30"><path d="M8 21l.7-5.500L16 6.700l8 5.800v2.300L15.400 21z" fill="#fdfdfd"/><path d="M8 21l.7-5.500 5.800 5.500z" fill="#e6ecf7"/></svg>
<div class="a" style="left:24px;top:128px;width:32px;height:30px;background:linear-gradient(#1b86ea,#0b62cf)"></div>
<div class="a" style="left:26.500px;top:130px;width:26px;height:26px;border-radius:50%;background:#fdfdfd"></div>
<svg style="left:28px;top:137px" width="24" height="12" viewBox="0 0 24 12" fill="#1470d6"><path d="M0 6L7 .5v3.800h10V.5L24 6l-7 5.500V7.700H7v3.800z"/></svg>
<svg style="left:23px;top:189px" width="30" height="26" viewBox="0 0 30 26"><ellipse cx="11.500" cy="10" rx="10.500" ry="8.700" fill="#64c832"/><path d="M5 16l-1.500 5 6-3.500z" fill="#64c832"/><circle cx="8" cy="7.500" r="1.200" fill="#1f6a0c"/><circle cx="15" cy="7.500" r="1.200" fill="#1f6a0c"/><ellipse cx="20.500" cy="16.500" rx="8.300" ry="7" fill="#f0f0f0"/><circle cx="17.500" cy="14.500" r=".9" fill="#866"/></svg>
<div class="a" style="left:0;top:232px;width:47px;height:58px;background:#c47131"></div>
<div class="a" style="left:0;top:232px;width:4px;height:58px;background:#bb682b"></div>
<div class="a" style="left:4px;top:232px;width:1px;height:58px;background:#b05f26"></div>
<div class="a" style="left:24px;top:246.500px;width:29px;height:29px;border-radius:50%;overflow:hidden;background:#f6f1ee"><svg style="left:0;top:0" width="30" height="30" viewBox="0 0 30 30"><path d="M3 9c2-6 9-9 17-7l3 3-5 3-9 2z" fill="#d6a62c"/><path d="M6 10c3-4 10-5 14-3 3 2 5 7 5 12l2 4-3 4-4-8-3-6-5 1-2 6-2 5-3-4c0-4 0-8 1-11z" fill="#1d1214"/><ellipse cx="13.500" cy="14" rx="3.600" ry="4.600" fill="#f5dccb"/><path d="M10 20l3 2 3-2 2 9H9z" fill="#c3141b"/><path d="M23 12l5 2v12l-4 1z" fill="#1d1214"/></svg></div>
<svg style="left:25px;top:306px" width="30" height="26" viewBox="0 0 30 26"><path d="M0 2h9l2 2h19v20H0z" fill="#e8b32c"/><rect x="0" y="5" width="30" height="19" fill="#f9cd4f"/><rect x="5" y="13" width="20" height="11" fill="#3a8fdf"/><rect x="9" y="17" width="12" height="7" fill="#f9cd4f"/></svg>
<div class="a" style="left:0;top:350px;width:47px;height:58px;background:#5d5d5d"></div>
<div class="a" style="left:5px;top:350px;width:42px;height:58px;background:#6c6c6c"></div>
<svg style="left:24px;top:363px" width="30" height="30" viewBox="0 0 30 30"><circle cx="15" cy="15" r="15" fill="#e34133"/><path d="M15 15L2 7.500A15 15 0 0 0 15 30z" fill="#1da462" transform="rotate(0 15 15)"/><path d="M15 15v15A15 15 0 0 0 28 7.500z" fill="#fbcd3e"/><path d="M15 15L2 7.500A15 15 0 0 1 28 7.500z" fill="#e34133"/><path d="M15 15L2.010 7.500A15 15 0 0 0 9 28.700z" fill="#1da462"/><circle cx="15" cy="15" r="7.200" fill="#fff"/><circle cx="15" cy="15" r="5.600" fill="#4a8af4"/></svg>
<svg style="left:28px;top:425px" width="24" height="26" viewBox="0 0 24 26"><path d="M0 0h15l9 7v19H0z" fill="#f5f5f5"/><path d="M15 0l9 7h-9z" fill="#cfcfcf"/></svg>
<div class="a" style="left:31px;top:482px;width:24px;height:24px;border:4.500px solid #1c9be0;border-radius:3px"></div>
<div class="a" style="left:24px;top:488px;width:24px;height:24px;border:4.500px solid #f48c06;border-radius:3px"></div>
<div class="a" style="left:31px;top:497px;width:13px;height:9px;border-left:4.500px solid #1c9be0;border-bottom:4.500px solid #1c9be0"></div>
<div class="a" style="left:0;top:563px;width:47px;height:21px;background:#f0f0f0"></div>
<svg style="left:6px;top:568px" width="8" height="11" viewBox="0 0 8 11" fill="none" stroke="#4d4d4d" stroke-width="2.200"><path d="M7 1L2 5.500 7 10"/></svg>
<div class="a" style="left:21px;top:563px;width:21px;height:21px;background:#c8c8c8"></div>
<div class="a" style="left:0;top:584px;width:47px;height:229px;background:linear-gradient(#4a4747 0%,#484243 45%,#3f2c30 75%,#39252a 100%)"></div>
<svg style="left:17px;top:590px" width="10" height="18" viewBox="0 0 10 18" fill="none" stroke="#fff" stroke-width="1.600"><path d="M9 1L1.500 9 9 17"/></svg>
<svg style="left:11px;top:618px" width="20" height="20" viewBox="0 0 20 20"><circle cx="10" cy="10" r="9.600" fill="#2fb858"/><path d="M6.500 6.500c1.500-2.500 6-2.500 7 .5.800 2.500.5 6-1.500 7-1.500.5-1.500-1.500-3-1.500-2 0-3.500-1-3.500-3 0-1 .3-2 1-3z" fill="#3a4a3e"/></svg>
<div class="a" style="left:42px;top:625px;width:0;height:0;border-right:6px solid #fff;border-top:3px solid transparent;border-bottom:3px solid transparent"></div>
<div class="a" style="left:0;top:584px;width:1px;height:229px;background:#6b6868"></div>
<div class="a" style="left:11px;top:648px;width:20px;height:20px;border-radius:50%;background:#1c961c"></div>
<div class="a" style="left:11px;top:653px;width:20px;height:10px;line-height:10px;font-size:7.500px;font-weight:bold;text-align:center;color:#e9f5e9;letter-spacing:-.3px;white-space:nowrap">BT.cn</div>
<div class="a" style="left:42px;top:650px;width:8px;height:16px;border-radius:2px;background:#1e9bf0"></div>
<svg style="left:8px;top:672px" width="27" height="25" viewBox="0 0 24 22"><ellipse cx="9" cy="8.500" rx="8" ry="7" fill="#62c530"/><path d="M4 13l-1 4.500 5-3z" fill="#62c530"/><ellipse cx="16" cy="13.500" rx="6.500" ry="5.500" fill="#f3f3f3"/><circle cx="14" cy="12" r=".7" fill="#888"/><circle cx="18" cy="12" r=".7" fill="#888"/></svg>
<svg style="left:40px;top:680px" width="10" height="22" viewBox="0 0 10 22" fill="none" stroke="#fff" stroke-width="1.300"><rect x="1" y="1" width="8" height="7"/><path d="M3 8v12M3 12h6"/></svg>
<svg style="left:13px;top:708px" width="20" height="20" viewBox="0 0 20 20" fill="none" stroke="#fff" stroke-width="1.300"><path d="M1.500 7h3.500l4-4v14l-4-4H1.500z"/><path d="M12 7.500c1 1.500 1 3.500 0 5" stroke="#ddd"/><path d="M14.500 5.500c2 3 2 6 0 9" stroke="#aaa"/><path d="M17 3.500c3 4 3 9 0 13" stroke="#888"/></svg>
<div class="a" style="left:9px;top:743px;width:20px;height:24px;line-height:24px;font-size:19px;font-weight:300;color:#fff;font-family:&quot;Noto Sans CJK SC&quot;,sans-serif">中</div>
<svg style="left:40px;top:744px" width="10" height="22" viewBox="0 0 10 22"><path d="M0 0l10 3v19l-6-2z" fill="#e9532b"/></svg>
<div class="a" style="left:19px;top:791px;width:40px;height:22px;line-height:22px;font-size:18px;color:#fff;white-space:nowrap">18:25</div>
</div>
</body>
</html>
